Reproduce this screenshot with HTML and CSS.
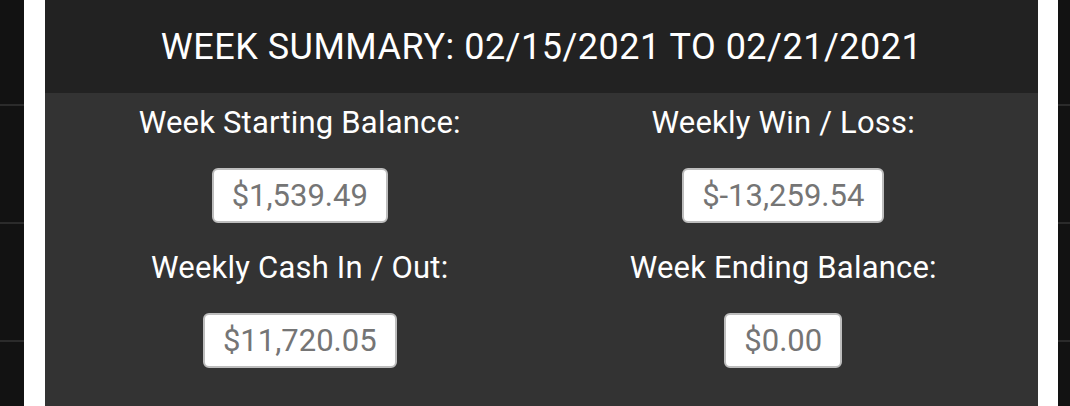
FILE: index.html
```html
<!DOCTYPE html>
<html>
<head>
<meta charset="utf-8">
<link rel="stylesheet" href="styles.css">
</head>
<body>
<div class="page">
  <div class="side side-left">
    <div class="row first"></div>
    <div class="row"></div>
    <div class="row"></div>
    <div class="row"></div>
  </div>
  <div class="frame">
    <div class="panel">
      <div class="panel-head">WEEK SUMMARY: 02/15/2021 TO 02/21/2021</div>
      <div class="panel-body">
        <div class="cell">
          <div class="label">Week Starting Balance:</div>
          <div class="value">$1,539.49</div>
        </div>
        <div class="cell">
          <div class="label">Weekly Win / Loss:</div>
          <div class="value">$-13,259.54</div>
        </div>
        <div class="cell">
          <div class="label">Weekly Cash In / Out:</div>
          <div class="value">$11,720.05</div>
        </div>
        <div class="cell">
          <div class="label">Week Ending Balance:</div>
          <div class="value">$0.00</div>
        </div>
      </div>
    </div>
  </div>
  <div class="side side-right">
    <div class="row first"></div>
    <div class="row"></div>
    <div class="row"></div>
    <div class="row"></div>
  </div>
</div>
</body>
</html>
```

FILE: styles.css
```css
html, body {
  margin: 0;
  padding: 0;
  height: 406px;
  overflow: hidden;
  background: #121212;
  font-family: Roboto, "Noto Sans", sans-serif;
}
.page {
  display: flex;
  height: 406px;
}
.side {
  display: flex;
  flex-direction: column;
  background: #121212;
}
.side-left { width: 24px; }
.side-right { width: 12px; }
.row {
  flex: none;
  height: 116px;
  border-bottom: 2px solid #2b2b2b;
}
.row.first { height: 104px; }
.frame {
  flex: 1;
  background: #ffffff;
  padding: 0 20px 0 21px;
}
.panel {
  height: 100%;
  background: #333333;
  display: flex;
  flex-direction: column;
}
.panel-head {
  flex: none;
  height: 93px;
  background: #222222;
  color: #ffffff;
  font-size: 36px;
  letter-spacing: 0.5px;
  display: flex;
  align-items: center;
  justify-content: center;
}
.panel-body {
  display: grid;
  grid-template-columns: 1fr 1fr;
  row-gap: 28px;
  padding: 13px 13px 0;
}
.cell {
  display: flex;
  flex-direction: column;
  align-items: center;
  gap: 28px;
}
.label {
  color: #ffffff;
  font-size: 31px;
  letter-spacing: 0.2px;
  line-height: 34px;
}
.value {
  box-sizing: border-box;
  height: 55px;
  padding: 0 18px;
  background: #ffffff;
  border: 2px solid #bdbdbd;
  border-radius: 6px;
  color: #757575;
  font-size: 31px;
  display: flex;
  align-items: center;
}
```
